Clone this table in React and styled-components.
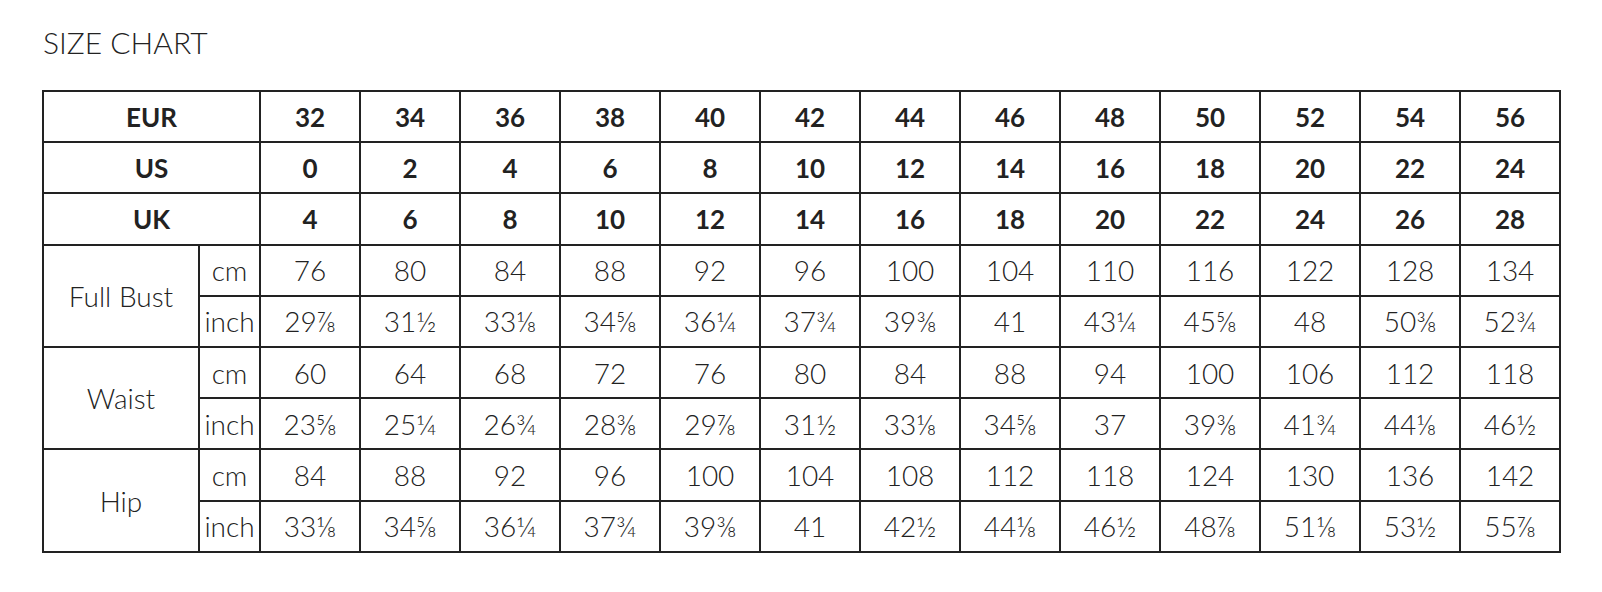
import React from 'react';
import styled, { createGlobalStyle } from 'styled-components';

const GlobalStyle = createGlobalStyle`
  body {
    margin: 0;
    background: #fff;
    font-family: Lato, "Open Sans", sans-serif;
    color: #222;
  }
`;

const Page = styled.div`
  padding: 24px 0 0 42px;
`;

const Title = styled.h2`
  margin: 0 0 30px 1px;
  font-size: 30px;
  line-height: 36px;
  font-weight: 300;
  color: #222;
`;

const Table = styled.table`
  border-collapse: collapse;
  table-layout: fixed;
  width: 1518px;
`;

const Row = styled.tr`
  height: 51.2px;
`;

const Cell = styled.td`
  border: 2px solid #222;
  padding: 0;
  text-align: center;
  vertical-align: middle;
  font-size: ${({ $head }) => ($head ? '26px' : '28px')};
  font-weight: ${({ $head }) => ($head ? 700 : 300)};
  line-height: 1;
  color: #222;
  white-space: nowrap;
`;

const sizes = [
  { label: 'EUR', values: ['32', '34', '36', '38', '40', '42', '44', '46', '48', '50', '52', '54', '56'] },
  { label: 'US', values: ['0', '2', '4', '6', '8', '10', '12', '14', '16', '18', '20', '22', '24'] },
  { label: 'UK', values: ['4', '6', '8', '10', '12', '14', '16', '18', '20', '22', '24', '26', '28'] },
];

const measures = [
  {
    label: 'Full Bust',
    cm: ['76', '80', '84', '88', '92', '96', '100', '104', '110', '116', '122', '128', '134'],
    inch: ['29⅞', '31½', '33⅛', '34⅝', '36¼', '37¾', '39⅜', '41', '43¼', '45⅝', '48', '50⅜', '52¾'],
  },
  {
    label: 'Waist',
    cm: ['60', '64', '68', '72', '76', '80', '84', '88', '94', '100', '106', '112', '118'],
    inch: ['23⅝', '25¼', '26¾', '28⅜', '29⅞', '31½', '33⅛', '34⅝', '37', '39⅜', '41¾', '44⅛', '46½'],
  },
  {
    label: 'Hip',
    cm: ['84', '88', '92', '96', '100', '104', '108', '112', '118', '124', '130', '136', '142'],
    inch: ['33⅛', '34⅝', '36¼', '37¾', '39⅜', '41', '42½', '44⅛', '46½', '48⅞', '51⅛', '53½', '55⅞'],
  },
];

const App = () => {
  return (
    <Page>
      <GlobalStyle />
      <Title>SIZE CHART</Title>
      <Table>
        <colgroup>
          <col style={{ width: 156 }} />
          <col style={{ width: 61 }} />
          {sizes[0].values.map((v) => (
            <col key={v} style={{ width: 100 }} />
          ))}
        </colgroup>
        <tbody>
          {sizes.map((s) => (
            <Row key={s.label}>
              <Cell $head colSpan={2}>{s.label}</Cell>
              {s.values.map((v, i) => (
                <Cell $head key={i}>{v}</Cell>
              ))}
            </Row>
          ))}
          {measures.map((m) => (
            <React.Fragment key={m.label}>
              <Row>
                <Cell rowSpan={2}>{m.label}</Cell>
                <Cell>cm</Cell>
                {m.cm.map((v, i) => (
                  <Cell key={i}>{v}</Cell>
                ))}
              </Row>
              <Row>
                <Cell>inch</Cell>
                {m.inch.map((v, i) => (
                  <Cell key={i}>{v}</Cell>
                ))}
              </Row>
            </React.Fragment>
          ))}
        </tbody>
      </Table>
    </Page>
  );
};

export default App;
